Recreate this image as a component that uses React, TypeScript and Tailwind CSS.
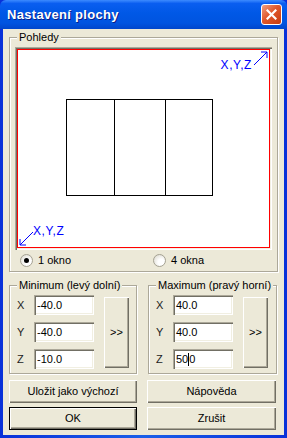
import React from "react";

const FONT = { fontFamily: '"Liberation Sans", Arial, sans-serif' };

const raised =
  "bg-[#ECE9D8] shadow-[inset_1px_1px_0_#ffffff,inset_-1px_-1px_0_#716f64,inset_-2px_-2px_0_#aca899]";
const sunken =
  "bg-white shadow-[inset_1px_1px_0_#aca899,inset_2px_2px_0_#716f64,inset_-1px_-1px_0_#ffffff,inset_-2px_-2px_0_#f1efe2]";

function Group({
  title,
  className,
  children,
}: {
  title: string;
  className?: string;
  children: React.ReactNode;
}) {
  return (
    <div
      className={
        "relative border border-[#aca899] shadow-[inset_1px_1px_0_#ffffff,1px_1px_0_#ffffff] " +
        (className ?? "")
      }
    >
      <span className="absolute left-[7px] top-[-8px] bg-[#ECE9D8] px-[2px] text-[11px] leading-[14px] text-black">
        {title}
      </span>
      {children}
    </div>
  );
}

function Radio({ checked, label }: { checked?: boolean; label: string }) {
  return (
    <div className="flex items-center gap-[5px]">
      <div className="w-[13px] h-[13px] rounded-full border border-[#a5a293] bg-[radial-gradient(circle_at_65%_65%,#ffffff_30%,#d6d3c7_100%)] flex items-center justify-center">
        {checked && <div className="w-[5px] h-[5px] rounded-full bg-black" />}
      </div>
      <span className="text-[11px] leading-[13px]">{label}</span>
    </div>
  );
}

function Field({ label, value, caret }: { label: string; value: string; caret?: boolean }) {
  return (
    <div className="flex items-center h-[20px]">
      <span className="w-[18px] text-[11px] text-[#222] pl-[1px]">{label}</span>
      <div className={"w-[60px] h-[20px] flex items-center pl-[3px] text-[11px] " + sunken}>
        {caret ? (
          <>
            <span>50</span>
            <span className="inline-block w-[1px] h-[13px] bg-black" />
            <span>0</span>
          </>
        ) : (
          <span>{value}</span>
        )}
      </div>
    </div>
  );
}

function MinMax({ title, values, caretZ }: { title: string; values: string[]; caretZ?: boolean }) {
  return (
    <Group title={title} className="h-[89px]">
      <div className="flex pl-[6px] pt-[9px]">
        <div className="flex flex-col gap-[7px]">
          <Field label="X" value={values[0]} />
          <Field label="Y" value={values[1]} />
          <Field label="Z" value={values[2]} caret={caretZ} />
        </div>
        <div
          className={
            "ml-[10px] mt-[2px] w-[25px] h-[71px] flex items-center justify-center text-[11px] " + raised
          }
        >
          &gt;&gt;
        </div>
      </div>
    </Group>
  );
}

export default function App() {
  return (
    <div
      style={FONT}
      className="w-[287px] h-[438px] flex flex-col bg-[linear-gradient(to_right,#0831d9,#1a5fe8_50%,#0831d9)] text-black"
    >
      {/* title bar */}
      <div className="h-[29px] flex items-center justify-between pl-[7px] pr-[5px] bg-[linear-gradient(to_bottom,#3d8bff_0%,#0a5ef0_12%,#0058e6_45%,#0054e0_80%,#0046cc_100%)] rounded-t-[6px]">
        <span
          className="text-white font-bold text-[13px] tracking-[0.3px] [text-shadow:1px_1px_0_#0a1f88]"
          style={FONT}
        >
          Nastavení plochy
        </span>
        <div className="w-[21px] h-[21px] rounded-[3px] border border-white bg-[linear-gradient(to_bottom_right,#f0a082,#e0582c_45%,#c83c10)] flex items-center justify-center">
          <svg width="11" height="11" viewBox="0 0 11 11">
            <path d="M1.5 1.5 L9.5 9.5 M9.5 1.5 L1.5 9.5" stroke="white" strokeWidth="2.2" strokeLinecap="square" />
          </svg>
        </div>
      </div>

      {/* client */}
      <div className="flex-1 ml-[3px] mr-[3px] mb-[3px] bg-[#ECE9D8] px-[6px] pt-[8px] flex flex-col">
        <Group title="Pohledy" className="h-[235px]">
          <div className="mx-[5px] mt-[9px]">
            <div className={"h-[203px] p-[2px] " + sunken}>
              <div className="relative h-full bg-white">
                {/* red viewport frame (part of the drawing) */}
                <svg className="absolute inset-0" width="100%" height="100%">
                  <rect x="0.5" y="0.5" width="calc(100% - 1px)" height="calc(100% - 1px)" fill="none" stroke="#ff0000" strokeWidth="1" />
                </svg>
                <div className="absolute inset-0 border border-[#ff0000]" />
                {/* top-right axis */}
                <span className="absolute right-[18px] top-[10px] text-[12px] leading-[12px] tracking-[0.6px] text-[#0000ff]">
                  X,Y,Z
                </span>
                <svg className="absolute right-[1px] top-[1px]" width="16" height="16" viewBox="0 0 16 16">
                  <path d="M1 15 L14 2" stroke="#0000ff" strokeWidth="1" />
                  <path d="M8 2 L14 2 L14 8" stroke="#0000ff" strokeWidth="1" fill="none" />
                </svg>
                {/* drawing */}
                <div className="absolute left-[49px] top-[50px] w-[147px] h-[97px] border border-black">
                  <div className="absolute left-[47px] top-0 bottom-0 w-[1px] bg-black" />
                  <div className="absolute left-[98px] top-0 bottom-0 w-[1px] bg-black" />
                </div>
                {/* bottom-left axis */}
                <span className="absolute left-[16px] bottom-[11px] text-[12px] leading-[12px] tracking-[0.6px] text-[#0000ff]">
                  X,Y,Z
                </span>
                <svg className="absolute left-[1px] bottom-[1px]" width="16" height="16" viewBox="0 0 16 16">
                  <path d="M15 1 L2 14" stroke="#0000ff" strokeWidth="1" />
                  <path d="M2 8 L2 14 L8 14" stroke="#0000ff" strokeWidth="1" fill="none" />
                </svg>
              </div>
            </div>
          </div>
          <div className="flex mt-[4px] pl-[10px]">
            <div className="w-[133px]">
              <Radio checked label="1 okno" />
            </div>
            <Radio label="4 okna" />
          </div>
        </Group>

        <div className="grid grid-cols-[128px_129px] gap-x-[11px] mt-[13px]">
          <MinMax title="Minimum (levý dolní)" values={["-40.0", "-40.0", "-10.0"]} />
          <MinMax title="Maximum (pravý horní)" values={["40.0", "40.0", "50.0"]} caretZ />
        </div>

        <div className="grid grid-cols-[128px_129px] gap-x-[10px] gap-y-[4px] mt-[6px]">
          <div className={"h-[23px] flex items-center justify-center text-[11px] " + raised}>
            Uložit jako výchozí
          </div>
          <div className={"h-[23px] flex items-center justify-center text-[11px] " + raised}>
            Nápověda
          </div>
          <div className="h-[23px] border border-black">
            <div className={"h-full flex items-center justify-center text-[11px] " + raised}>OK</div>
          </div>
          <div className={"h-[23px] flex items-center justify-center text-[11px] " + raised}>
            Zrušit
          </div>
        </div>
      </div>
    </div>
  );
}
